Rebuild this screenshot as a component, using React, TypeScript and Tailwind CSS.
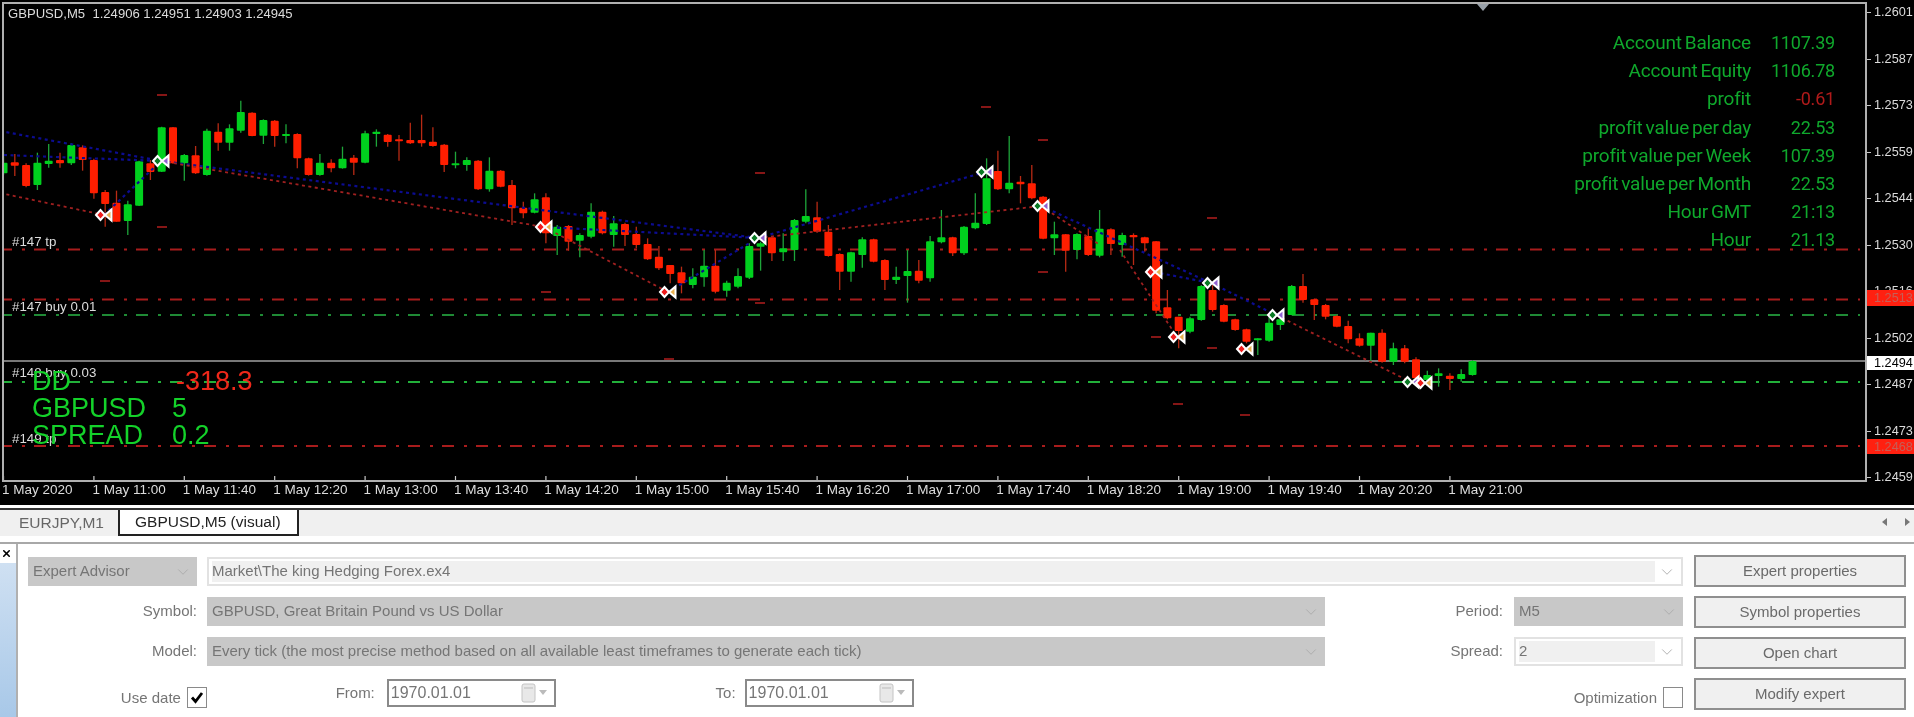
import { ChevronDown, X } from 'lucide-react';

// candles: [up, wickTop, bodyTop, bodyBottom, wickBottom], y read off a 3x crop, so divided by 3 when drawn
const candles: [number, number, number, number, number][] = [
  [1, 455, 488, 520, 525], [0, 462, 487, 497, 528], [0, 490, 495, 558, 562], [1, 458, 488, 555, 570], [1, 432, 482, 492, 503],
  [0, 458, 480, 490, 503], [1, 430, 435, 490, 495], [0, 436, 442, 480, 512], [0, 476, 480, 580, 596], [0, 570, 576, 612, 680],
  [0, 572, 608, 665, 665], [1, 602, 613, 663, 705], [1, 482, 484, 617, 618], [0, 480, 490, 516, 540], [1, 380, 382, 515, 516],
  [0, 381, 382, 490, 491], [1, 462, 465, 490, 542], [0, 438, 466, 520, 522], [1, 386, 392, 525, 527], [0, 370, 395, 428, 452],
  [1, 373, 385, 428, 452], [1, 302, 336, 392, 398], [0, 337, 338, 408, 409], [1, 358, 360, 407, 432], [0, 360, 362, 408, 440],
  [1, 373, 402, 408, 430], [0, 400, 402, 475, 505], [0, 473, 475, 525, 527], [1, 462, 488, 525, 527], [0, 478, 488, 505, 517],
  [1, 440, 476, 505, 506], [0, 465, 473, 488, 525], [1, 392, 400, 488, 490], [1, 388, 395, 402, 440], [0, 402, 404, 426, 440],
  [0, 405, 418, 424, 482], [0, 368, 420, 430, 432], [0, 344, 420, 430, 440], [0, 382, 425, 438, 440], [0, 432, 434, 495, 516],
  [1, 455, 490, 496, 505], [1, 472, 480, 495, 512], [0, 480, 482, 568, 570], [1, 472, 512, 568, 575], [0, 510, 512, 560, 562],
  [0, 540, 555, 625, 675], [0, 605, 623, 640, 655], [1, 580, 598, 638, 640], [0, 580, 592, 700, 730], [1, 675, 680, 708, 765],
  [0, 675, 678, 725, 752], [1, 700, 705, 722, 772], [1, 610, 635, 710, 715], [0, 632, 635, 700, 703], [1, 648, 670, 705, 740],
  [0, 668, 672, 705, 738], [0, 680, 702, 735, 745], [0, 715, 732, 778, 780], [0, 738, 770, 805, 810], [0, 795, 795, 822, 850],
  [0, 800, 817, 850, 880], [1, 805, 830, 855, 865], [1, 750, 797, 832, 860], [0, 750, 797, 875, 880], [1, 842, 848, 872, 890],
  [1, 805, 828, 860, 865], [1, 730, 738, 833, 837], [1, 725, 730, 740, 812], [0, 708, 712, 760, 783], [1, 700, 745, 757, 783],
  [1, 657, 660, 750, 783], [1, 568, 648, 665, 670], [0, 605, 652, 695, 698], [0, 675, 695, 768, 770], [0, 760, 762, 815, 870],
  [1, 755, 757, 815, 845], [1, 712, 718, 765, 803], [0, 716, 718, 785, 787], [0, 778, 780, 840, 870], [1, 800, 830, 840, 852],
  [1, 750, 813, 828, 908], [0, 780, 812, 842, 850], [1, 708, 724, 835, 845], [1, 630, 712, 727, 730], [0, 710, 712, 760, 768],
  [1, 678, 680, 760, 765], [1, 580, 668, 685, 688], [1, 475, 535, 672, 675], [0, 452, 513, 568, 570], [1, 408, 548, 568, 580],
  [0, 528, 545, 553, 610], [0, 495, 550, 595, 598], [0, 588, 590, 716, 718], [1, 665, 703, 715, 765], [0, 702, 703, 752, 815],
  [1, 700, 702, 750, 778], [0, 685, 708, 765, 768], [1, 630, 686, 767, 772], [0, 685, 688, 732, 765], [1, 698, 705, 735, 770],
  [0, 700, 705, 712, 795], [0, 710, 712, 730, 755], [0, 723, 724, 932, 940], [0, 870, 922, 955, 958], [0, 950, 950, 993, 1045],
  [1, 950, 955, 995, 1000], [1, 855, 858, 960, 962], [0, 850, 870, 930, 935], [0, 913, 915, 965, 967], [0, 956, 958, 990, 992],
  [0, 986, 988, 1025, 1030], [1, 1015, 1015, 1020, 1065], [1, 950, 968, 1022, 1025], [1, 940, 958, 975, 990], [1, 855, 858, 945, 946],
  [0, 822, 858, 900, 908], [0, 896, 898, 915, 960], [0, 912, 915, 950, 958], [0, 945, 948, 980, 982], [0, 962, 978, 1018, 1030],
  [0, 1000, 1015, 1037, 1040], [1, 998, 998, 1037, 1083], [0, 988, 998, 1085, 1088], [1, 1028, 1045, 1085, 1095], [0, 1035, 1045, 1085, 1090],
  [0, 1072, 1078, 1135, 1140], [1, 1112, 1125, 1140, 1150], [1, 1105, 1120, 1128, 1160], [0, 1120, 1127, 1137, 1170], [1, 1108, 1122, 1137, 1145],
  [1, 1080, 1083, 1125, 1127],
];

const blueLines = [
  [0, 131, 161, 161], [4, 155, 161, 161], [104, 215, 161, 161], [161, 161, 758, 238], [544, 227, 758, 238], [668, 292, 758, 238],
  [758, 238, 985, 172], [1041, 206, 1211, 283], [1154, 272, 1211, 283], [1211, 283, 1276, 315],
];

const redLines = [
  [0, 193, 104, 215], [161, 161, 544, 227], [544, 227, 668, 292], [758, 238, 1041, 206], [1041, 206, 1100, 245], [1120, 250, 1177, 337],
  [1276, 315, 1411, 382],
];

const levels = [
  { y: 249.5, color: '#a81c1c' },
  { y: 299.5, color: '#a81c1c' },
  { y: 315, color: '#1f8a35' },
  { y: 382, color: '#22b03a' },
  { y: 446, color: '#a81c1c' },
];

const stops = [
  [162, 95], [162, 227], [105, 281], [546, 292], [760, 173], [986, 107], [1043, 140], [1212, 218], [1043, 272],
  [760, 303], [669, 359], [1156, 337], [1212, 348], [1178, 404], [1245, 415],
];

const buys = [[161, 161], [758, 238], [985, 172], [1041, 206], [1211, 283], [1276, 315], [1411, 382]];
const sells = [[104, 215], [544, 227], [668, 292], [1154, 272], [1177, 337], [1245, 349], [1424, 383]];

const dates = ['1 May 2020', '1 May 11:00', '1 May 11:40', '1 May 12:20', '1 May 13:00', '1 May 13:40', '1 May 14:20', '1 May 15:00', '1 May 15:40', '1 May 16:20', '1 May 17:00', '1 May 17:40', '1 May 18:20', '1 May 19:00', '1 May 19:40', '1 May 20:20', '1 May 21:00'];
const prices = ['1.2601', '1.2587', '1.2573', '1.2559', '1.2544', '1.2530', '1.2516', '1.2502', '1.2487', '1.2473', '1.2459'];

const stats = [
  ['Account Balance', '1107.39'],
  ['Account Equity', '1106.78'],
  ['profit', '-0.61'],
  ['profit value per day', '22.53'],
  ['profit value per Week', '107.39'],
  ['profit value per Month', '22.53'],
  ['Hour GMT', '21:13'],
  ['Hour', '21.13'],
];

function Marker({ x, y, buy }: { x: number; y: number; buy: boolean }) {
  return (
    <g stroke="#fff" strokeWidth="2">
      <polygon points={`${x - 8},${y} ${x - 3.5},${y - 5} ${x + 1},${y} ${x - 3.5},${y + 5}`} fill={buy ? '#0a7a24' : '#f01c1c'} />
      <polygon points={`${x + 1},${y} ${x + 7.5},${y - 5.5} ${x + 7.5},${y + 5.5}`} fill={buy ? '#9060d0' : '#e8b050'} />
    </g>
  );
}

function Chart() {
  return (
    <svg className="absolute inset-0" width="1861" height="476" viewBox="4 4 1861 476">
      {levels.map((l) => (
        <line key={l.y} x1="0" x2="1860" y1={l.y} y2={l.y} stroke={l.color} strokeWidth="2" strokeDasharray="12 10 3 9" />
      ))}
      <line x1="0" x2="1866" y1="361" y2="361" stroke="#a0a0a0" strokeWidth="1.6" />
      {stops.map(([x, y]) => (
        <line key={`${x}-${y}`} x1={x - 5} x2={x + 5} y1={y} y2={y} stroke="#a81c1c" strokeWidth="1.6" />
      ))}
      {candles.map(([up, wt, bt, bb, wb], i) => {
        const x = 3.5 + 11.3 * i;
        return (
          <g key={i}>
            <line x1={x} x2={x} y1={wt / 3} y2={wb / 3} stroke={up ? '#1ea53a' : '#b82a14'} strokeWidth="1.3" />
            <rect x={x - 4} y={bt / 3} width="8" height={Math.max((bb - bt) / 3, 2)} rx="1" fill={up ? '#00d01e' : '#ff1e00'} />
          </g>
        );
      })}
      {blueLines.map(([x1, y1, x2, y2]) => (
        <line key={`b${x1}-${y1}`} x1={x1} y1={y1} x2={x2} y2={y2} stroke="#0c0c90" strokeWidth="2.2" strokeDasharray="3 3.5" />
      ))}
      {redLines.map(([x1, y1, x2, y2]) => (
        <line key={`r${x1}-${y1}`} x1={x1} y1={y1} x2={x2} y2={y2} stroke="#a02020" strokeWidth="1.8" strokeDasharray="3 3.5" />
      ))}
      {buys.map(([x, y]) => (
        <Marker key={x} x={x} y={y} buy />
      ))}
      {sells.map(([x, y]) => (
        <Marker key={x} x={x} y={y} buy={false} />
      ))}
      <polygon points="1477,4 1489,4 1483,11" fill="#98a0a8" />
      {dates.map((d, i) => (
        <line key={d} x1={3.5 + 90.4 * i} x2={3.5 + 90.4 * i} y1="476" y2="481" stroke="#c8c8c8" strokeWidth="1.2" />
      ))}
    </svg>
  );
}

function Field({ children, chevron, dark, className }: { children?: React.ReactNode; chevron?: boolean; dark?: boolean; className: string }) {
  return (
    <div className={`relative flex h-[29px] items-center text-[15px] text-[#757575] ${dark ? 'bg-[#c8c8c8] px-[5px]' : 'border-2 border-[#e2e2e2] bg-white pl-[3px] pr-[26px]'} ${className}`}>
      {dark ? children : <div className="flex h-[21px] flex-1 items-center bg-[#f0f0f0]">{children}</div>}
      {chevron && <ChevronDown className="absolute right-[5px] text-[#aaa]" size={18} strokeWidth={1.2} />}
    </div>
  );
}

function Label({ children, className }: { children: React.ReactNode; className: string }) {
  return <div className={`text-right text-[15px] text-[#757575] ${className}`}>{children}</div>;
}

function DateBox({ value, className }: { value: string; className: string }) {
  return (
    <div className={`flex h-[28px] items-center justify-between border-2 border-[#8a8a8a] pl-[2px] pr-[5px] text-[16px] text-[#757575] ${className}`}>
      {value}
      <svg width="28" height="20" viewBox="0 0 28 20">
        <rect x="1" y="1" width="13" height="18" rx="2" fill="#e8e8e8" stroke="#c4c4c4" />
        <line x1="3" x2="12" y1="5" y2="5" stroke="#bbb" />
        <polygon points="18,7 26,7 22,12" fill="#bbb" />
      </svg>
    </div>
  );
}

function Check({ checked }: { checked?: boolean }) {
  return (
    <div className="flex h-[21px] w-[20px] items-center justify-center border-[1.5px] border-[#8a8a8a] bg-white">
      {checked && (
        <svg width="14" height="13" viewBox="0 0 14 13">
          <path d="M2 6.5 L5.5 10.5 L12 2" fill="none" stroke="#000" strokeWidth="2.8" />
        </svg>
      )}
    </div>
  );
}

function Button({ children }: { children: React.ReactNode }) {
  return (
    <div className="flex h-[32px] w-[212px] items-center justify-center border-2 border-[#8f8f8f] bg-[#f0f0f0] text-[15px] text-[#6a6a6a]">
      {children}
    </div>
  );
}

export default function App() {
  return (
    <div className="h-[717px] w-[1914px] overflow-hidden bg-white font-['Liberation_Sans',sans-serif] blur-[0.4px]">
      <div className="h-[505px] bg-black pl-[2px] pt-[2px] text-[#dcdcdc]">
        <div className="flex h-[480px]">
          <div className="relative h-[480px] w-[1865px] shrink-0 border-2 border-[#b0b0b0]">
            <Chart />
            <div className="absolute left-[4px] top-[2px] whitespace-pre text-[13.1px] leading-[16px]">GBPUSD,M5  1.24906 1.24951 1.24903 1.24945</div>
            <div className="absolute left-[8px] top-[230px] text-[13.3px] leading-[16px]">#147 tp</div>
            <div className="absolute left-[8px] top-[295px] text-[13.3px] leading-[16px]">#147 buy 0.01</div>
            <div className="absolute left-[8px] top-[361px] text-[13.3px] leading-[16px]">#148 buy 0.03</div>
            <div className="absolute left-[8px] top-[427px] text-[13.3px] leading-[16px]">#149 tp</div>
            <div className="absolute left-[28px] top-[364px] grid grid-cols-[140px_auto] text-[27px] leading-[27px] text-[#14d22a]">
              <div>DD</div>
              <div className="ml-[4px] text-[#f0281a]">-318.3</div>
              <div>GBPUSD</div>
              <div>5</div>
              <div>SPREAD</div>
              <div>0.2</div>
            </div>
            <div className="absolute right-[30px] top-[25px] grid grid-cols-[auto_84px] text-right font-['Roboto',sans-serif] text-[19px] leading-[28.2px] tracking-[-0.2px] text-[#0fa82c] [word-spacing:-1.5px]">
              {stats.map(([label, value]) => (
                <div key={label} className="contents">
                  <div>{label}</div>
                  <div className={`text-[18px] ${value === '-0.61' ? 'text-[#b01a1a]' : ''}`}>{value}</div>
                </div>
              ))}
            </div>
          </div>
          <div className="relative w-[47px] shrink-0 pt-[2px] text-[12.7px] leading-[16px]">
            {prices.map((p) => (
              <div key={p} className="flex h-[46.5px] shrink-0 items-start">
                <div className="mr-[3px] mt-[8px] h-px w-[4px] bg-[#c8c8c8]" />
                <div>{p}</div>
              </div>
            ))}
            <div className="absolute left-0 top-[288px] flex h-[16px] w-[47px] items-center bg-[#ff2010] pl-[7px] text-[#c46058]">1.2513</div>
            <div className="absolute left-0 top-[354px] flex h-[14px] w-[47px] items-center bg-white pl-[7px] text-black">1.2494</div>
            <div className="absolute left-0 top-[437px] flex h-[15px] w-[47px] items-center bg-[#ff2010] pl-[7px] text-[#c46058]">1.2468</div>
          </div>
        </div>
        <div className="flex h-[16px] text-[13.5px] leading-[16px]">
          {dates.map((d) => (
            <div key={d} className="w-[90.4px] shrink-0">{d}</div>
          ))}
        </div>
      </div>

      <div className="h-[3px] bg-white" />
      <div className="flex h-[28px] items-start border-t-2 border-[#333] bg-[#f0f0f0] text-[15.5px]">
        <div className="flex h-[26px] w-[118px] items-center pl-[19px] text-[#666]">EURJPY,M1</div>
        <div className="flex h-[26px] w-[181px] items-center border-x-2 border-b-2 border-[#222] bg-white pl-[15px] text-[#222]">GBPUSD,M5 (visual)</div>
        <div className="ml-auto mt-[8px] flex gap-[18px] pr-[4px]">
          <svg width="5" height="8" viewBox="0 0 5 8"><polygon points="5,0 5,8 0,4" fill="#777" /></svg>
          <svg width="5" height="8" viewBox="0 0 5 8"><polygon points="0,0 0,8 5,4" fill="#777" /></svg>
        </div>
      </div>
      <div className="h-[8px] border-b-2 border-[#a8a8a8] bg-white" />

      <div className="flex h-[173px]">
        <div className="flex w-[18px] shrink-0 flex-col border-r-2 border-[#b0b0b0]">
          <div className="flex h-[19px] shrink-0 items-center pl-[1px]">
            <X size={11} strokeWidth={3.5} className="text-black" />
          </div>
          <div className="flex-1 bg-gradient-to-b from-[#cfe0f2] to-[#a8c8e8]" />
        </div>
        <div className="w-[1665px] shrink-0 pl-[10px] pt-[13px]">
          <div className="flex h-[29px] items-center">
            <Field dark chevron className="w-[169px] text-[14px]">Expert Advisor</Field>
            <Field chevron className="ml-[10px] w-[1476px]">Market\The king Hedging Forex.ex4</Field>
          </div>
          <div className="mt-[11px] flex h-[29px] items-center">
            <Label className="w-[169px]">Symbol:</Label>
            <Field dark chevron className="ml-[10px] w-[1118px]">GBPUSD, Great Britain Pound vs US Dollar</Field>
            <Label className="w-[178px]">Period:</Label>
            <Field dark chevron className="ml-[11px] w-[169px]">M5</Field>
          </div>
          <div className="mt-[11px] flex h-[29px] items-center">
            <Label className="w-[169px]">Model:</Label>
            <Field dark chevron className="ml-[10px] w-[1118px]">Every tick (the most precise method based on all available least timeframes to generate each tick)</Field>
            <Label className="w-[178px]">Spread:</Label>
            <Field chevron className="ml-[11px] w-[169px]">2</Field>
          </div>
          <div className="mt-[13px] flex h-[28px] items-center">
            <Label className="w-[153px] pt-[11px]">Use date</Label>
            <div className="ml-[6px] mt-[8px]"><Check checked /></div>
            <Label className="w-[168px]">From:</Label>
            <DateBox value="1970.01.01" className="ml-[12px] w-[169px]" />
            <Label className="w-[180px]">To:</Label>
            <DateBox value="1970.01.01" className="ml-[9px] w-[170px]" />
            <Label className="w-[743px] pt-[11px]">Optimization</Label>
            <div className="ml-[6px] mt-[8px]"><Check /></div>
          </div>
        </div>
        <div className="ml-[11px] flex flex-col gap-[9px] pt-[11px]">
          <Button>Expert properties</Button>
          <Button>Symbol properties</Button>
          <Button>Open chart</Button>
          <Button>Modify expert</Button>
        </div>
      </div>
    </div>
  );
}
